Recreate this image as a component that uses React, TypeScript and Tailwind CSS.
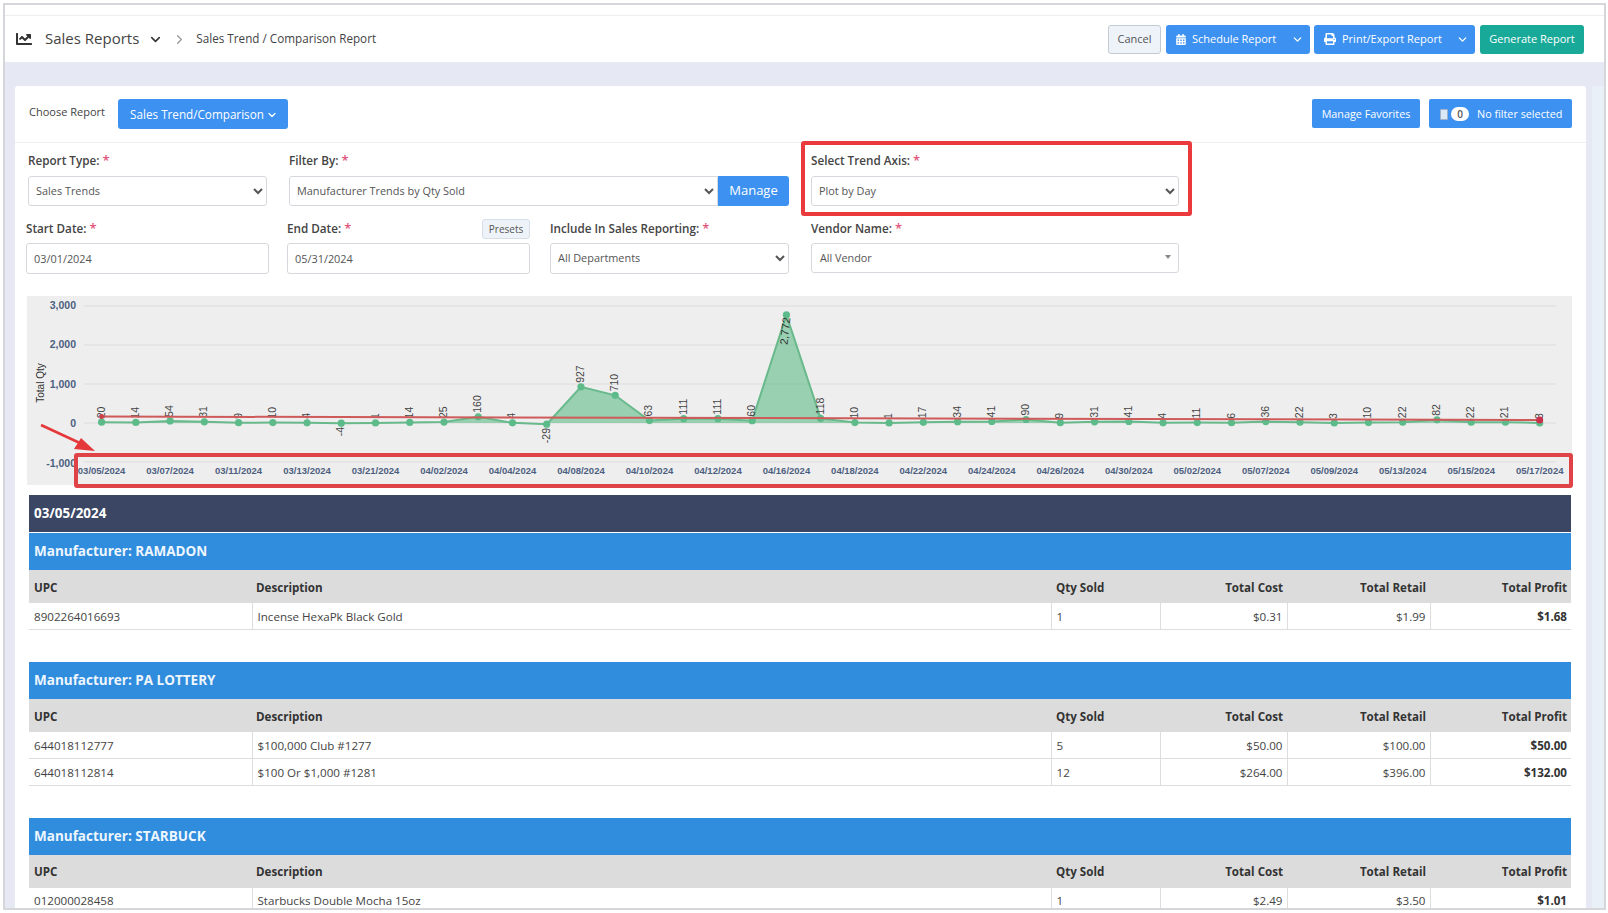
import { ChevronDown, ChevronRight } from 'lucide-react';
import { FaCalendarAlt, FaChartLine, FaPrint } from 'react-icons/fa';

const font = { fontFamily: '"Open Sans", "Liberation Sans", sans-serif' };

const values = [20, 14, 54, 31, 9, 10, 4, -4, 1, 14, 25, 160, 4, -29, 927, 710, 63, 111, 111, 60, 2772, 118, 10, 1, 17, 34, 41, 90, 9, 31, 41, 4, 11, 6, 36, 22, 3, 10, 22, 82, 22, 21, 3];
const dates = ['03/05/2024', '03/07/2024', '03/11/2024', '03/13/2024', '03/21/2024', '04/02/2024', '04/04/2024', '04/08/2024', '04/10/2024', '04/12/2024', '04/16/2024', '04/18/2024', '04/22/2024', '04/24/2024', '04/26/2024', '04/30/2024', '05/02/2024', '05/07/2024', '05/09/2024', '05/13/2024', '05/15/2024', '05/17/2024'];

const px = (i: number) => 101.6 + i * 34.24;
const py = (v: number) => 423 - v * 0.039;

function Chart() {
  const line = values.map((v, i) => `${px(i)},${py(v)}`).join(' ');
  const area = `${px(0)},423 ${line} ${px(42)},423`;
  return (
    <svg viewBox="27 296 1545 189" className="block h-[189px] w-[1545px]" style={{ fontFamily: '"Liberation Sans", sans-serif' }}>
      <rect x="27" y="296" width="1545" height="189" fill="#eeeeee" />
      {[3000, 2000, 1000, 0, -1000].map((t) => (
        <g key={t}>
          <line x1="84" x2="1556" y1={py(t)} y2={py(t)} stroke="#dcdcdc" />
          <text x="76" y={py(t) + 2.5 + (3000 - t) / 2000} textAnchor="end" fontSize="10.5" fontWeight="600" fill="#4d5f80">
            {t.toLocaleString('en-US')}
          </text>
        </g>
      ))}
      <text transform="rotate(-90 44 383)" x="44" y="383" textAnchor="middle" fontSize="10" fill="#333">Total Qty</text>
      <polygon points={area} fill="#63bd8a" fillOpacity="0.62" />
      <polyline points={line} fill="none" stroke="#68b98b" strokeWidth="2" />
      {values.map((v, i) => (
        <circle key={i} cx={px(i)} cy={py(v)} r="3.6" fill="#5dbb8a" />
      ))}
      {values.map((v, i) => {
        const x = px(i) + 3;
        if (v === 2772) {
          return <text key={i} transform={`rotate(-84 ${x - 2} 345)`} x={x - 2} y="345" fontSize="11" fill="#333">2,772</text>;
        }
        const y = v < 0 ? py(v) + (v < -9 ? 19 : 13) : py(v) - 4;
        return <text key={i} transform={`rotate(-90 ${x} ${y})`} x={x} y={y} fontSize="10.5" fill="#444">{v}</text>;
      })}
      <line x1={px(0)} y1="416.5" x2={px(42)} y2="420" stroke="#cf5a5a" strokeWidth="2" />
      <circle cx={px(0)} cy="416.5" r="2.5" fill="#c9404a" />
      <circle cx={px(42)} cy="420" r="3.5" fill="#c9304a" />
      {dates.map((d, i) => (
        <text key={d} x={px(i * 2)} y="474" textAnchor="middle" fontSize="9.5" fontWeight="600" fill="#4d5f80">{d}</text>
      ))}
    </svg>
  );
}

function Label({ text }: { text: string }) {
  return (
    <span className="h-5 text-[11.7px] font-semibold leading-[18px] text-[#444]">
      {text}: <span className="text-[13px] leading-none text-[#e0567a]">*</span>
    </span>
  );
}

function Sel({ value, className }: { value: string; className: string }) {
  return (
    <select defaultValue={value} className={`h-[30px] rounded-[3px] border border-[#d5d8dc] bg-white pb-[2px] pl-[3px] text-[10.9px] text-[#555] ${className}`}>
      <option>{value}</option>
    </select>
  );
}

type Row = [string, string, string, string, string, string];

function Section({ title, rows, className = '' }: { title: string; rows: Row[]; className?: string }) {
  return (
    <div className={className}>
      <div className="flex h-[37px] items-center bg-[#308dde] pl-[5px] text-[13.5px] font-bold text-[#eef6fd]">{title}</div>
      <table className="w-full table-fixed border-b border-[#dddddd] text-[11.6px] text-[#444]">
        <colgroup>
          <col className="w-[223px]" />
          <col className="w-[799px]" />
          <col className="w-[109px]" />
          <col className="w-[127px]" />
          <col className="w-[143px]" />
          <col />
        </colgroup>
        <thead>
          <tr className="h-[33px] bg-[#dcdcdc] font-bold text-[#333]">
            <th className="pl-[5px] pt-[2px] text-left font-bold">UPC</th>
            <th className="pl-[4px] pt-[2px] text-left font-bold">Description</th>
            <th className="pl-[5px] pt-[2px] text-left font-bold">Qty Sold</th>
            <th className="pr-[4px] pt-[2px] text-right font-bold">Total Cost</th>
            <th className="pr-[4px] pt-[2px] text-right font-bold">Total Retail</th>
            <th className="pr-[4px] pt-[2px] text-right font-bold">Total Profit</th>
          </tr>
        </thead>
        <tbody>
          {rows.map((r) => (
            <tr key={r[0]} className="h-[26.5px] border-t border-[#dddddd] first:border-t-0">
              <td className="pl-[5px] pt-[1px]">{r[0]}</td>
              <td className="border-l border-[#dddddd] pl-[5px] pt-[1px]">{r[1]}</td>
              <td className="border-l border-[#dddddd] pl-[5px] pt-[1px]">{r[2]}</td>
              <td className="border-l border-[#dddddd] pr-[4px] pt-[1px] text-right">{r[3]}</td>
              <td className="border-l border-[#dddddd] pr-[4px] pt-[1px] text-right">{r[4]}</td>
              <td className="border-l border-[#dddddd] pr-[4px] pt-[1px] text-right font-bold text-[#333]">{r[5]}</td>
            </tr>
          ))}
        </tbody>
      </table>
    </div>
  );
}

export default function App() {
  return (
    <div className="relative h-[913px] w-[1608px] overflow-hidden bg-white pl-[3px] pr-[2px] pt-[3px]" style={font}>
      <div className="flex h-[907px] flex-col overflow-hidden border-2 border-[#d4d6d9] bg-white">
        <div className="h-[11px] shrink-0 border-b border-[#eeeeee]" />
        <header className="flex h-[46px] shrink-0 items-center pl-[11px] pr-[20px] text-[#444]">
          <FaChartLine className="h-[16px] w-[16px] text-[#333]" />
          <span className="ml-[13px] pb-[2px] text-[15px] text-[#444]">Sales Reports</span>
          <ChevronDown className="ml-[9px] h-[15px] w-[15px] text-[#333]" strokeWidth={2.5} />
          <ChevronRight className="ml-[9px] h-[15px] w-[15px] text-[#999]" strokeWidth={2} />
          <span className="ml-[9px] text-[11.7px]">Sales Trend / Comparison Report</span>
          <div className="ml-auto flex h-[29px] items-stretch text-[11px] text-white">
            <button className="w-[53px] rounded-[3px] border border-[#c3cad3] bg-[#eef3f9] text-[#555]">Cancel</button>
            <button className="ml-[5px] flex w-[144px] items-center rounded-[3px] bg-[#3c91f1] pl-[10px]">
              <FaCalendarAlt className="h-[11px] w-[10px]" />
              <span className="ml-[6px]">Schedule Report</span>
              <ChevronDown className="ml-auto mr-[6px] h-[13px] w-[13px]" strokeWidth={2.5} />
            </button>
            <button className="ml-[4px] flex w-[161px] items-center rounded-[3px] bg-[#3c91f1] pl-[10px]">
              <FaPrint className="h-[12px] w-[12px]" />
              <span className="ml-[6px]">Print/Export Report</span>
              <ChevronDown className="ml-auto mr-[6px] h-[13px] w-[13px]" strokeWidth={2.5} />
            </button>
            <button className="ml-[5px] w-[104px] rounded-[3px] bg-[#18a999]">Generate Report</button>
          </div>
        </header>
        <main className="flex min-h-0 flex-1 bg-[#e6e9f3] pl-[10px] pt-[24px]">
          <div className="flex min-h-0 w-[1571px] shrink-0 flex-col overflow-hidden rounded-t-[3px] bg-white">
            <div className="flex h-[57px] shrink-0 items-start border-b border-[#eeeeee] pl-[14px] pr-[14px] pt-[13px]">
              <span className="mt-[5px] w-[76px] text-[11px] font-medium text-[#444]">Choose Report</span>
              <button className="ml-[13px] flex h-[30px] w-[170px] items-center justify-center rounded-[3px] bg-[#3c91f1] pl-[2px] pt-[1px] text-[11.7px] text-white">
                Sales Trend/Comparison
                <ChevronDown className="ml-[2px] h-[12px] w-[12px]" strokeWidth={2.5} />
              </button>
              <button className="ml-auto h-[29px] w-[108px] rounded-[2px] bg-[#3c91f1] pt-[1px] text-[10.8px] text-white">Manage Favorites</button>
              <button className="ml-[9px] flex h-[29px] w-[143px] items-center rounded-[2px] bg-[#3c91f1] pl-[11px] pt-[1px] text-[10.8px] text-white">
                <span className="h-[11px] w-[8px] rounded-[1px] border border-[#9fb2c9] bg-[#dbe8f8]" />
                <span className="ml-[3px] flex h-[14px] w-[18px] items-center justify-center rounded-full bg-white text-[10px] font-semibold text-[#555]">0</span>
                <span className="ml-[8px]">No filter selected</span>
              </button>
            </div>
            <div className="flex shrink-0 items-start pt-[8px]">
              <div className="ml-[13px] flex w-[239px] flex-col">
                <Label text="Report Type" />
                <Sel value="Sales Trends" className="mt-[5px] w-full" />
              </div>
              <div className="ml-[22px] flex w-[500px] flex-col">
                <Label text="Filter By" />
                <div className="mt-[5px] flex">
                  <Sel value="Manufacturer Trends by Qty Sold" className="min-w-0 flex-1 rounded-r-none" />
                  <button className="h-[30px] w-[71px] rounded-r-[3px] bg-[#3c91f1] text-[13px] text-white">Manage</button>
                </div>
              </div>
              <div className="ml-[22px] flex w-[368px] flex-col">
                <Label text="Select Trend Axis" />
                <Sel value="Plot by Day" className="mt-[5px] w-full" />
              </div>
            </div>
            <div className="mt-[13px] flex shrink-0 items-start">
              <div className="ml-[11px] flex w-[243px] flex-col">
                <Label text="Start Date" />
                <div className="mt-[4px] flex h-[31px] items-center rounded-[3px] border border-[#d5d8dc] pl-[7px] pt-[1px] text-[10.9px] text-[#555]">03/01/2024</div>
              </div>
              <div className="ml-[18px] flex w-[243px] flex-col">
                <div className="flex items-center justify-between">
                  <Label text="End Date" />
                  <span className="flex h-[20px] w-[48px] items-center justify-center rounded-[3px] border border-[#d6dee8] bg-[#eef3f9] text-[10px] text-[#555]">Presets</span>
                </div>
                <div className="mt-[4px] flex h-[31px] items-center rounded-[3px] border border-[#d5d8dc] pl-[7px] pt-[1px] text-[10.9px] text-[#555]">05/31/2024</div>
              </div>
              <div className="ml-[20px] flex w-[239px] flex-col">
                <Label text="Include In Sales Reporting" />
                <Sel value="All Departments" className="mt-[4px] h-[31px] w-full" />
              </div>
              <div className="ml-[22px] flex w-[368px] flex-col">
                <Label text="Vendor Name" />
                <div className="mt-[4px] flex h-[30px] items-center justify-between rounded-[3px] border border-[#d5d8dc] pl-[8px] pr-[7px] pt-[1px] text-[10.8px] text-[#555]">
                  All Vendor
                  <span className="mb-[3px] h-0 w-0 border-x-[3px] border-t-[4px] border-x-transparent border-t-[#888]" />
                </div>
              </div>
            </div>
            <div className="ml-[12px] mt-[22px] shrink-0">
              <Chart />
            </div>
            <div className="ml-[14px] mr-[15px] mt-[10px] flex h-[38px] shrink-0 items-center border-b border-white bg-[#3b4664] pb-[1px] pl-[5px] text-[13.4px] font-bold text-white">
              03/05/2024
            </div>
            <Section title="Manufacturer: RAMADON" rows={[['8902264016693', 'Incense HexaPk Black Gold', '1', '$0.31', '$1.99', '$1.68']]} className="ml-[14px] mr-[15px] shrink-0" />
            <Section
              title="Manufacturer: PA LOTTERY"
              rows={[
                ['644018112777', '$100,000 Club #1277', '5', '$50.00', '$100.00', '$50.00'],
                ['644018112814', '$100 Or $1,000 #1281', '12', '$264.00', '$396.00', '$132.00'],
              ]}
              className="ml-[14px] mr-[15px] mt-[32px] shrink-0"
            />
            <Section title="Manufacturer: STARBUCK" rows={[['012000028458', 'Starbucks Double Mocha 15oz', '1', '$2.49', '$3.50', '$1.01']]} className="ml-[14px] mr-[15px] mt-[32px] shrink-0" />
          </div>
          <div className="ml-[6px] flex-1 self-stretch bg-[#eaf0f8]" />
        </main>
      </div>
      <div className="absolute left-[801px] top-[141px] h-[75px] w-[391px] rounded-[3px] border-4 border-[#ea3a3e]" />
      <div className="absolute left-[74px] top-[453px] h-[35px] w-[1499px] rounded-[3px] border-4 border-[#e04347]" />
      <svg className="absolute left-[38px] top-[422px] h-[32px] w-[60px]" viewBox="38 422 60 32">
        <path d="M41 425 L82 444" stroke="#e5383b" strokeWidth="2.5" fill="none" />
        <path d="M95 451 L74 449 L81 438 Z" fill="#e5383b" />
      </svg>
    </div>
  );
}
